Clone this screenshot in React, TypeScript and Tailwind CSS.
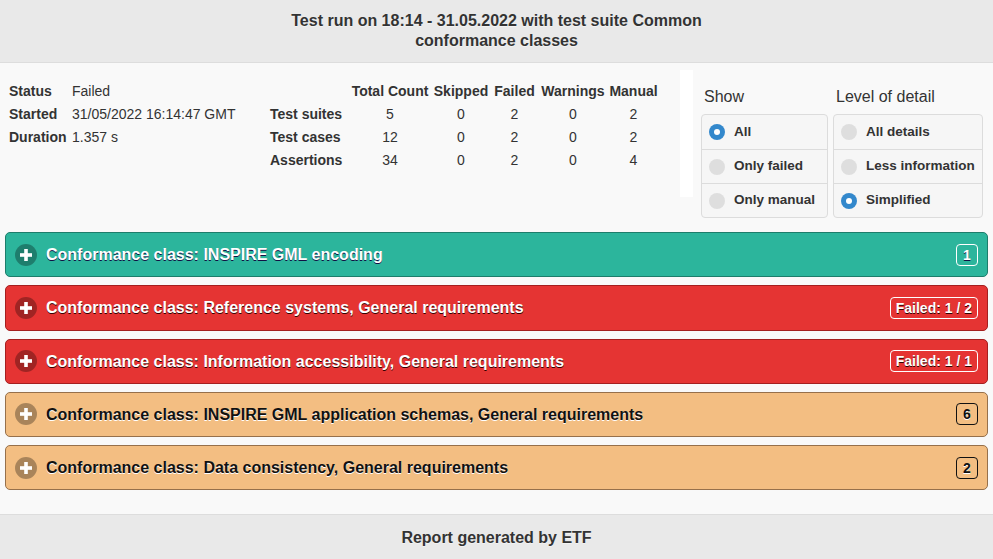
import React from 'react';

type Kind = 'ok' | 'fail' | 'manual';

interface Section {
  title: string;
  kind: Kind;
  badge: string;
}

const sections: Section[] = [
  { title: 'Conformance class: INSPIRE GML encoding', kind: 'ok', badge: '1' },
  { title: 'Conformance class: Reference systems, General requirements', kind: 'fail', badge: 'Failed: 1 / 2' },
  { title: 'Conformance class: Information accessibility, General requirements', kind: 'fail', badge: 'Failed: 1 / 1' },
  { title: 'Conformance class: INSPIRE GML application schemas, General requirements', kind: 'manual', badge: '6' },
  { title: 'Conformance class: Data consistency, General requirements', kind: 'manual', badge: '2' },
];

const stats = [
  { label: 'Test suites', values: ['5', '0', '2', '0', '2'] },
  { label: 'Test cases', values: ['12', '0', '2', '0', '2'] },
  { label: 'Assertions', values: ['34', '0', '2', '0', '4'] },
];

const columns = [
  { name: 'Total Count', w: 'w-[82px]' },
  { name: 'Skipped', w: 'w-[60px]' },
  { name: 'Failed', w: 'w-[47px]' },
  { name: 'Warnings', w: 'w-[70px]' },
  { name: 'Manual', w: 'w-[51px]' },
];

const Radio: React.FC<{ checked?: boolean }> = ({ checked }) =>
  checked ? (
    <span className="w-4 h-4 rounded-full bg-[#3388cc] flex items-center justify-center shrink-0">
      <span className="w-[6px] h-[6px] rounded-full bg-white" />
    </span>
  ) : (
    <span className="w-4 h-4 rounded-full bg-[#dedede] shrink-0" />
  );

const RadioGroup: React.FC<{ label: string; width: string; items: string[]; selected: number }> = ({
  label,
  width,
  items,
  selected,
}) => (
  <div className={width}>
    <div className="pl-[3px] h-5 leading-5 text-[16px] text-[#333] mb-[7px]">{label}</div>
    <div className="border border-[#dcdcdc] rounded-[4px] bg-[#f6f6f6]">
      {items.map((it, i) => (
        <div
          key={it}
          className={`h-[34px] flex items-center gap-[9px] pl-[7px] text-[13.5px] font-bold text-[#333] ${
            i > 0 ? 'border-t border-[#dcdcdc]' : ''
          }`}
        >
          <Radio checked={i === selected} />
          {it}
        </div>
      ))}
    </div>
  </div>
);

const Collapsible: React.FC<{ s: Section }> = ({ s }) => {
  const box =
    s.kind === 'ok'
      ? 'bg-[#2cb59c] border-[#1d7d6b] text-white [text-shadow:0_1px_0_#114]'
      : s.kind === 'fail'
      ? 'bg-[#e53433] border-[#a41f1f] text-white [text-shadow:0_1px_0_#300]'
      : 'bg-[#f3be82] border-[#96704b] text-[#111] [text-shadow:0_1px_0_#fff]';
  const badge = s.kind === 'manual' ? 'border-[#111]' : 'border-white';
  return (
    <div className={`h-[45.25px] border rounded-[5px] flex items-center pl-[9px] pr-[9px] ${box}`}>
      <span className="w-[22px] h-[22px] rounded-full bg-black/30 flex items-center justify-center shrink-0">
        <svg width="12" height="12" viewBox="0 0 12 12">
          <rect x="4.2" y="0" width="3.6" height="12" fill="#fff" />
          <rect x="0" y="4.2" width="12" height="3.6" fill="#fff" />
        </svg>
      </span>
      <span className="ml-[9px] pt-[1px] text-[16px] font-bold flex-1">{s.title}</span>
      <span
        className={`h-[22px] min-w-[22px] px-[5px] border rounded-[4px] text-[14px] font-bold leading-[20px] text-center ${badge}`}
      >
        {s.badge}
      </span>
    </div>
  );
};

export default function App() {
  return (
    <div className="w-[993px] h-[559px] bg-[#f9f9f9] font-['Liberation_Sans',Arial,sans-serif] text-[#333] flex flex-col overflow-hidden">
      <header className="h-[63px] bg-[#e9e9e9] border-b border-[#dddddd] flex items-center justify-center shrink-0">
        <h1 className="w-[430px] text-center text-[16px] leading-5 font-bold text-[#333] [text-shadow:0_1px_0_#f3f3f3]">
          Test run on 18:14 - 31.05.2022 with test suite Common conformance classes
        </h1>
      </header>

      <div className="flex h-[169px] shrink-0">
        <div className="w-[680px] flex pt-[17px] text-[14px]">
          <div className="pl-[9px] w-[270px]">
            {[
              ['Status', 'Failed'],
              ['Started', '31/05/2022 16:14:47 GMT'],
              ['Duration', '1.357 s'],
            ].map(([k, v]) => (
              <div key={k} className="flex h-[23px] items-center">
                <span className="w-[63px] font-bold">{k}</span>
                <span>{v}</span>
              </div>
            ))}
          </div>
          <div>
            <div className="flex h-[23px] items-center font-bold">
              <span className="w-[79px]" />
              {columns.map((c) => (
                <span key={c.name} className={`${c.w} text-center whitespace-nowrap`}>
                  {c.name}
                </span>
              ))}
            </div>
            {stats.map((r) => (
              <div key={r.label} className="flex h-[23px] items-center">
                <span className="w-[79px] font-bold whitespace-nowrap">{r.label}</span>
                {r.values.map((v, i) => (
                  <span key={i} className={`${columns[i].w} text-center`}>
                    {v}
                  </span>
                ))}
              </div>
            ))}
          </div>
        </div>
        <div className="w-[13px] h-[127px] mt-[7px] bg-white" />
        <div className="flex gap-[5px] pl-[8px] pt-[24px]">
          <RadioGroup label="Show" width="w-[127px]" items={['All', 'Only failed', 'Only manual']} selected={0} />
          <RadioGroup
            label="Level of detail"
            width="w-[150px]"
            items={['All details', 'Less information', 'Simplified']}
            selected={2}
          />
        </div>
      </div>

      <div className="flex flex-col gap-[8px] mx-[5px]">
        {sections.map((s) => (
          <Collapsible key={s.title} s={s} />
        ))}
      </div>

      <footer className="mt-auto h-[45px] bg-[#e9e9e9] border-t border-[#dddddd] flex items-center justify-center shrink-0">
        <span className="pt-[1px] text-[16px] font-bold text-[#333] [text-shadow:0_1px_0_#f3f3f3]">Report generated by ETF</span>
      </footer>
    </div>
  );
}
